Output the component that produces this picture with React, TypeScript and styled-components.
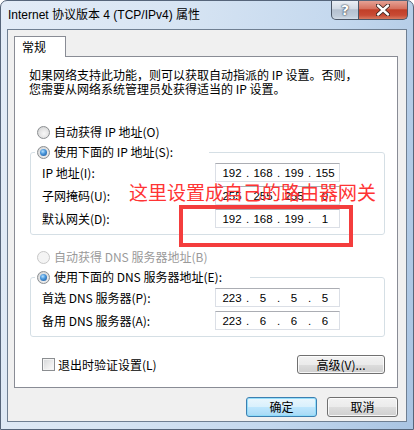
import { Fragment } from "react";
import styled, { createGlobalStyle, css } from "styled-components";

const GlobalStyle = createGlobalStyle`
  * {
    box-sizing: border-box;
  }
  html,
  body {
    margin: 0;
    padding: 0;
    background: #fff;
    overflow: hidden;
  }
  body {
    font-family: "Noto Sans CJK SC", "Noto Sans", sans-serif;
    font-size: 12px;
    color: #000;
  }
`;

const Window = styled.div`
  width: 414px;
  height: 430px;
  display: flex;
  flex-direction: column;
  border: 1px solid #56657a;
  border-radius: 7px 7px 0 0;
  background: linear-gradient(
    100deg,
    #e3ecf7 0%,
    #d8e5f3 35%,
    #c4d8ee 70%,
    #a9c4e2 100%
  );
  overflow: hidden;
`;

const TitleBar = styled.div`
  height: 28px;
  display: flex;
  justify-content: space-between;
  align-items: flex-start;
  flex: none;
`;

const Title = styled.div`
  padding: 6px 0 0 7px;
  line-height: 16px;
  font-family: "Liberation Sans", "Noto Sans CJK SC", sans-serif;
  font-size: 12px;
`;

const Caption = styled.div`
  display: flex;
  margin: -1px 5px 0 0;
`;

const CaptionButton = styled.div<{ $close?: boolean }>`
  height: 20px;
  width: ${(p) => (p.$close ? 49 : 28)}px;
  display: flex;
  align-items: center;
  justify-content: center;
  border: 1px solid #4b5666;
  border-top: none;
  color: #fff;
  font-family: "DejaVu Sans", sans-serif;
  font-weight: bold;
  font-size: 14px;
  text-shadow: 0 0 2px #2b3440, 0 0 1px #2b3440;
  ${(p) =>
    p.$close
      ? css`
          border-left: none;
          border-radius: 0 0 5px 0;
          background: linear-gradient(
            #e7a89c 0%,
            #d6715f 45%,
            #c13f28 52%,
            #c84a34 80%,
            #d77a60 100%
          );
        `
      : css`
          border-radius: 0 0 0 5px;
          background: linear-gradient(
            #eef2f7 0%,
            #d3dbe5 45%,
            #b4c0cf 52%,
            #bfcbd9 85%,
            #d3dde8 100%
          );
        `}
`;

const Client = styled.div`
  margin: 0 6px;
  height: 393px;
  border: 1px solid #6f7f92;
  background: #f0f0f0;
  display: flex;
  flex-direction: column;
  padding: 6px 8px 4px 6px;
`;

const TabStrip = styled.div`
  display: flex;
`;

const Tab = styled.div`
  width: 52px;
  height: 21px;
  margin-bottom: -1px;
  padding-left: 7px;
  line-height: 19px;
  border: 1px solid #898c95;
  border-bottom: none;
  background: #fff;
  position: relative;
  z-index: 1;
`;

const Panel = styled.div`
  height: 332px;
  border: 1px solid #898c95;
  background: #fff;
  position: relative;
  display: flex;
  flex-direction: column;
`;

const Desc = styled.div`
  margin: 11px 0 0 14px;
  line-height: 14px;
`;

const OptionRow = styled.div<{ $top: number }>`
  margin-top: ${(p) => p.$top}px;
  padding-left: 22px;
  height: 16px;
  display: flex;
  align-items: center;
`;

const Option = styled.span<{ $disabled?: boolean }>`
  display: flex;
  align-items: center;
  gap: 4px;
  line-height: 16px;
  color: ${(p) => (p.$disabled ? "#9a9a9a" : "#000")};
`;

const RadioDot = styled.span<{ $checked?: boolean; $disabled?: boolean }>`
  width: 13px;
  height: 13px;
  flex: none;
  border-radius: 50%;
  position: relative;
  border: 1px solid ${(p) => (p.$disabled ? "#c8c8c8" : "#8b8e91")};
  background: ${(p) =>
    p.$disabled
      ? "#f4f4f4"
      : "radial-gradient(circle at 55% 60%, #f8f8f8 0%, #e6e6e6 45%, #c9cbcd 100%)"};
  ${(p) =>
    p.$checked &&
    css`
      &::after {
        content: "";
        position: absolute;
        left: 2px;
        top: 2px;
        width: 7px;
        height: 7px;
        border-radius: 50%;
        background: radial-gradient(
          circle at 40% 35%,
          #b6e1ff 0%,
          #4b98dc 40%,
          #184f93 100%
        );
      }
    `}
`;

const Group = styled.fieldset<{ $top: number }>`
  margin: ${(p) => p.$top}px 12px 0 15px;
  padding: 0;
  min-width: 0;
  border: 1px solid #d5dfe5;
  border-radius: 3px;
`;

const Legend = styled.legend<{ $width: number }>`
  margin-left: 4px;
  padding: 0 0 0 2px;
  width: ${(p) => p.$width}px;
  height: 16px;
`;

const GroupBody = styled.div`
  padding: 3px 44px 6px 11px;
  display: flex;
  flex-direction: column;
  gap: 4px;
`;

const FieldRow = styled.div`
  display: flex;
  align-items: center;
  height: 19px;
`;

const FieldLabel = styled.span`
  width: 174px;
  line-height: 16px;
`;

const IpBox = styled.div`
  width: 125px;
  height: 19px;
  display: flex;
  align-items: center;
  padding-left: 2px;
  background: #fff;
  border: 1px solid #dbdfe6;
  border-top-color: #abadb3;
  font-family: "Liberation Sans", sans-serif;
  font-size: 11.5px;
`;

const Octet = styled.span`
  width: 28px;
  text-align: center;
`;

const Dot = styled.span`
  width: 3px;
  text-align: center;
`;

const BottomRow = styled.div`
  margin: 18px 12px 0 27px;
  height: 19px;
  display: flex;
  justify-content: space-between;
  align-items: center;
`;

const CheckLabel = styled.span`
  display: flex;
  align-items: center;
  gap: 3px;
  line-height: 16px;
`;

const CheckBox = styled.span`
  width: 13px;
  height: 13px;
  border: 1px solid #8b8e91;
  background: linear-gradient(135deg, #d4d6d8 0%, #eeeeee 60%, #fbfbfb 100%);
  box-shadow: inset 0 0 0 1px #f4f4f4;
`;

const Button = styled.div<{ $w: number; $h: number; $primary?: boolean }>`
  width: ${(p) => p.$w}px;
  height: ${(p) => p.$h}px;
  display: flex;
  align-items: center;
  justify-content: center;
  border-radius: 3px;
  line-height: 16px;
  border: 1px solid ${(p) => (p.$primary ? "#3c7fb1" : "#707070")};
  box-shadow: inset 0 0 0 1px
    ${(p) => (p.$primary ? "rgba(140, 220, 250, 0.9)" : "rgba(255, 255, 255, 0.8)")};
  background: ${(p) =>
    p.$primary
      ? "linear-gradient(#eaf6fd 0%, #d9f0fc 50%, #bee6fd 51%, #a7d9f5 100%)"
      : "linear-gradient(#f2f2f2 0%, #ebebeb 50%, #dddddd 51%, #cfcfcf 100%)"};
`;

const DialogButtons = styled.div`
  margin-top: 9px;
  display: flex;
  justify-content: flex-end;
  gap: 10px;
`;

const Note = styled.div`
  position: absolute;
  left: 114px;
  top: 125px;
  font-size: 19px;
  line-height: 19px;
  color: #ff3434;
  white-space: nowrap;
`;

const Highlight = styled.div`
  position: absolute;
  left: 164px;
  top: 148px;
  width: 174px;
  height: 42px;
  border: 4px solid #f43d3d;
`;

const ipFields = [
  { label: "IP 地址(I):", value: ["192", "168", "199", "155"] },
  { label: "子网掩码(U):", value: ["255", "255", "255", "0"] },
  { label: "默认网关(D):", value: ["192", "168", "199", "1"] },
];

const dnsFields = [
  { label: "首选 DNS 服务器(P):", value: ["223", "5", "5", "5"] },
  { label: "备用 DNS 服务器(A):", value: ["223", "6", "6", "6"] },
];

function IpInput({ value }: { value: string[] }) {
  return (
    <IpBox>
      {value.map((v, i) => (
        <Fragment key={i}>
          <Octet>{v}</Octet>
          {i < 3 ? <Dot>.</Dot> : null}
        </Fragment>
      ))}
    </IpBox>
  );
}

function Fields({ items }: { items: { label: string; value: string[] }[] }) {
  return (
    <GroupBody>
      {items.map((f) => (
        <FieldRow key={f.label}>
          <FieldLabel>{f.label}</FieldLabel>
          <IpInput value={f.value} />
        </FieldRow>
      ))}
    </GroupBody>
  );
}

export default function App() {
  return (
    <>
      <GlobalStyle />
      <Window>
        <TitleBar>
          <Title>Internet 协议版本 4 (TCP/IPv4) 属性</Title>
          <Caption>
            <CaptionButton>?</CaptionButton>
            <CaptionButton $close>
              <svg width="14" height="12" viewBox="0 0 14 12">
                <path
                  d="M2 1.5 L12 10.5 M12 1.5 L2 10.5"
                  stroke="#3a2420"
                  strokeWidth="4.2"
                  strokeLinecap="round"
                />
                <path
                  d="M2 1.5 L12 10.5 M12 1.5 L2 10.5"
                  stroke="#fff"
                  strokeWidth="2.4"
                  strokeLinecap="round"
                />
              </svg>
            </CaptionButton>
          </Caption>
        </TitleBar>
        <Client>
          <TabStrip>
            <Tab>常规</Tab>
          </TabStrip>
          <Panel>
            <Desc>
              如果网络支持此功能，则可以获取自动指派的 IP 设置。否则，
              <br />
              您需要从网络系统管理员处获得适当的 IP 设置。
            </Desc>
            <OptionRow $top={28}>
              <Option>
                <RadioDot />
                自动获得 IP 地址(O)
              </Option>
            </OptionRow>
            <Group $top={4}>
              <Legend $width={174}>
                <Option>
                  <RadioDot $checked />
                  使用下面的 IP 地址(S):
                </Option>
              </Legend>
              <Fields items={ipFields} />
            </Group>
            <OptionRow $top={14}>
              <Option $disabled>
                <RadioDot $disabled />
                自动获得 DNS 服务器地址(B)
              </Option>
            </OptionRow>
            <Group $top={4}>
              <Legend $width={215}>
                <Option>
                  <RadioDot $checked />
                  使用下面的 DNS 服务器地址(E):
                </Option>
              </Legend>
              <Fields items={dnsFields} />
            </Group>
            <BottomRow>
              <CheckLabel>
                <CheckBox />
                退出时验证设置(L)
              </CheckLabel>
              <Button $w={88} $h={19}>
                高级(V)...
              </Button>
            </BottomRow>
            <Note>这里设置成自己的路由器网关</Note>
            <Highlight />
          </Panel>
          <DialogButtons>
            <Button $w={71} $h={20} $primary>
              确定
            </Button>
            <Button $w={71} $h={20}>
              取消
            </Button>
          </DialogButtons>
        </Client>
      </Window>
    </>
  );
}
